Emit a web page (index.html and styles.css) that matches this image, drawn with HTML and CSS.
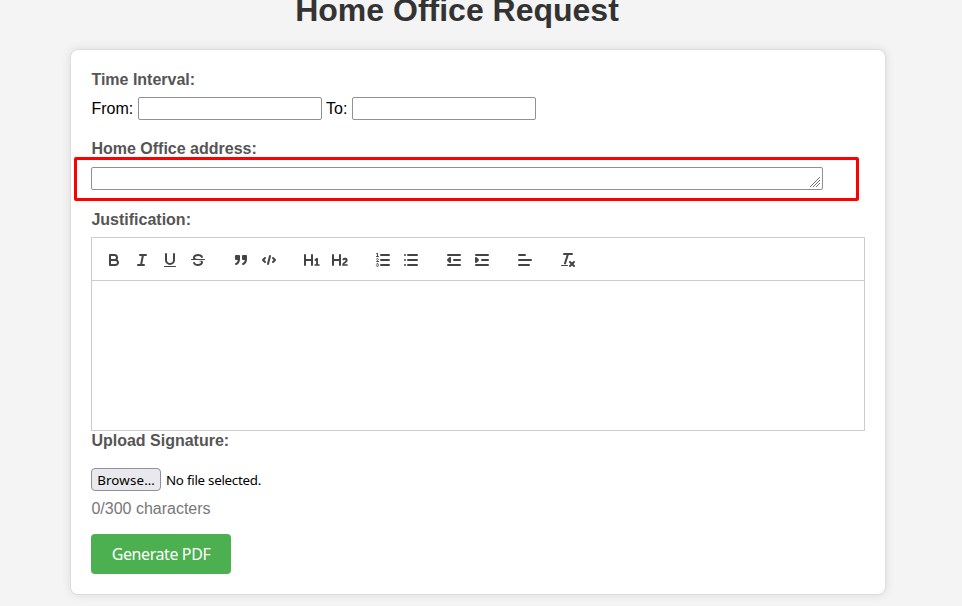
FILE: index.html
```html
<!DOCTYPE html>
<html lang="en">
<head>
<meta charset="utf-8">
<title>Home Office Request</title>
<link rel="stylesheet" href="styles.css">
</head>
<body>
<h1 class="title">Home Office Request</h1>
<form class="card">
  <label class="label">Time Interval:</label>
  <div class="interval">
    <span>From:</span><input class="date" type="text" aria-label="From">
    <span>To:</span><input class="date" type="text" aria-label="To">
  </div>
  <label class="label">Home Office address:</label>
  <div class="address">
    <div class="field">
      <svg class="grip" viewBox="0 0 10 10"><path d="M0 10L10 0M3 10L10 3M6 10L10 6"/></svg>
    </div>
    <div class="highlight"></div>
  </div>
  <label class="label">Justification:</label>
  <div class="toolbar">
    <div class="group">
      <button type="button" class="tool" aria-label="Bold"><svg viewBox="0 0 18 18"><path class="s" d="M5,4H9.5A2.5,2.5,0,0,1,12,6.5v0A2.5,2.5,0,0,1,9.5,9H5A0,0,0,0,1,5,9V4A0,0,0,0,1,5,4Z"/><path class="s" d="M5,9h5.5A2.5,2.5,0,0,1,13,11.5v0A2.5,2.5,0,0,1,10.5,14H5a0,0,0,0,1,0,0V9A0,0,0,0,1,5,9Z"/></svg></button>
      <button type="button" class="tool" aria-label="Italic"><svg viewBox="0 0 18 18"><path class="s" d="M7 4H13M5 14H11M8 14L10 4"/></svg></button>
      <button type="button" class="tool" aria-label="Underline"><svg viewBox="0 0 18 18"><path class="s" d="M5,3V9a4.012,4.012,0,0,0,4,4H9a4.012,4.012,0,0,0,4-4V3"/><rect class="f" height="1" rx=".5" ry=".5" width="12" x="3" y="15"/></svg></button>
      <button type="button" class="tool" aria-label="Strike"><svg viewBox="0 0 18 18"><path class="s thin" d="M15.5 8.5H2.5"/><path class="f" d="M9.007,8C6.542,7.791,6,7.519,6,6.5,6,5.792,7.283,5,9,5c1.571,0,2.765.679,2.969,1.309a1,1,0,0,0,1.9-.617C13.356,4.106,11.354,3,9,3,6.2,3,4,4.538,4,6.5a3.2,3.2,0,0,0,.5,1.843Z"/><path class="f" d="M8.984,10C11.457,10.208,12,10.479,12,11.5c0,0.708-1.283,1.5-3,1.5-1.571,0-2.765-.679-2.969-1.309a1,1,0,1,0-1.9.617C4.644,13.894,6.646,15,9,15c2.8,0,5-1.538,5-3.5a3.2,3.2,0,0,0-.5-1.843Z"/></svg></button>
    </div>
    <div class="group">
      <button type="button" class="tool" aria-label="Quote"><svg viewBox="0 0 18 18"><rect class="f s" height="3" width="3" x="4" y="5"/><rect class="f s" height="3" width="3" x="11" y="5"/><path class="f s" d="M7,8c0,4.031-3,5-3,5"/><path class="f s" d="M14,8c0,4.031-3,5-3,5"/></svg></button>
      <button type="button" class="tool" aria-label="Code"><svg viewBox="0 0 18 18"><path class="s" d="M5 7L3 9L5 11M13 7L15 9L13 11M10 5L8 13"/></svg></button>
    </div>
    <div class="group">
      <button type="button" class="tool" aria-label="Heading 1"><svg viewBox="0 0 18 18"><path class="f" d="M10,4V14a1,1,0,0,1-2,0V10H3v4a1,1,0,0,1-2,0V4A1,1,0,0,1,3,4V8H8V4a1,1,0,0,1,2,0Zm6.06787,9.209H14.98975V7.59863a.54085.54085,0,0,0-.605-.60547h-.62744a1.01119,1.01119,0,0,0-.748.29688L11.645,8.56641a.5435.5435,0,0,0-.022.8584l.28613.30762a.53861.53861,0,0,0,.84717.0332l.09912-.08789a1.2137,1.2137,0,0,0,.2417-.35254h.02246s-.01123.30859-.01123.60547V13.209H12.041a.54085.54085,0,0,0-.605.60547v.43945a.54085.54085,0,0,0,.605.60547h4.02686a.54085.54085,0,0,0,.605-.60547v-.43945A.54085.54085,0,0,0,16.06787,13.209Z"/></svg></button>
      <button type="button" class="tool" aria-label="Heading 2"><svg viewBox="0 0 18 18"><path class="f" d="M16.73975,13.81445v.43945a.54085.54085,0,0,1-.605.60547H11.855a.58392.58392,0,0,1-.64893-.60547V14.0127c0-2.90527,3.39941-3.42187,3.39941-4.55469a.77675.77675,0,0,0-.84717-.78125,1.17684,1.17684,0,0,0-.83594.38477c-.2749.26367-.561.374-.85791.13184l-.4292-.34082c-.30811-.24219-.38525-.51758-.1543-.81445a2.97155,2.97155,0,0,1,2.45361-1.17676,2.45393,2.45393,0,0,1,2.68408,2.40918c0,2.45312-3.1792,2.92676-3.27832,3.93848h2.79443A.54085.54085,0,0,1,16.73975,13.81445ZM9,3A.99974.99974,0,0,0,8,4V8H3V4A1,1,0,0,0,1,4V14a1,1,0,0,0,2,0V10H8v4a1,1,0,0,0,2,0V4A.99974.99974,0,0,0,9,3Z"/></svg></button>
    </div>
    <div class="group">
      <button type="button" class="tool" aria-label="Ordered list"><svg viewBox="0 0 18 18"><path class="s" d="M7 4H15M7 9H15M7 14H15"/><path class="s thin" d="M2.5 5.5H4.5"/><path class="f" d="M3.5,6A0.5,0.5,0,0,1,3,5.5V3.085l-0.276.138A0.5,0.5,0,0,1,2.053,3c-0.124-.247-0.023-0.324.224-0.447l1-.5A0.5,0.5,0,0,1,4,2.5v3A0.5,0.5,0,0,1,3.5,6Z"/><path class="s thin" d="M4.5,10.5h-2c0-.234,1.85-1.076,1.85-2.234A0.959,0.959,0,0,0,2.5,8.156"/><path class="s thin" d="M2.5,14.846a0.959,0.959,0,0,0,1.85-.109A0.7,0.7,0,0,0,3.75,14a0.688,0.688,0,0,0,.6-0.736,0.959,0.959,0,0,0-1.85-.109"/></svg></button>
      <button type="button" class="tool" aria-label="Bullet list"><svg viewBox="0 0 18 18"><path class="s" d="M6 4H15M6 9H15M6 14H15M3 4H3M3 9H3M3 14H3"/></svg></button>
    </div>
    <div class="group">
      <button type="button" class="tool" aria-label="Outdent"><svg viewBox="0 0 18 18"><path class="s" d="M3 14H15M3 4H15M9 9H15"/><path class="f s" d="M5 7V11L3 9Z"/></svg></button>
      <button type="button" class="tool" aria-label="Indent"><svg viewBox="0 0 18 18"><path class="s" d="M3 14H15M3 4H15M9 9H15"/><path class="f s" d="M3 7V11L5 9Z"/></svg></button>
    </div>
    <div class="group">
      <button type="button" class="tool" aria-label="Align"><svg viewBox="0 0 18 18"><path class="s" d="M3 9H15M3 14H13M3 4H9"/></svg></button>
    </div>
    <div class="group">
      <button type="button" class="tool" aria-label="Clear formatting"><svg viewBox="0 0 18 18"><path class="s" d="M5 3H13M6 12.35L9 3M11 11L15 15M15 11L11 15"/><rect class="f" height="1" rx=".5" ry=".5" width="7" x="2" y="14"/></svg></button>
    </div>
  </div>
  <div class="editor" contenteditable="true"></div>
  <label class="label">Upload Signature:</label>
  <div class="file"><button type="button" class="browse">Browse…</button><span class="status">No file selected.</span></div>
  <div class="count">0/300 characters</div>
  <button type="button" class="submit">Generate PDF</button>
</form>
</body>
</html>
```
FILE: styles.css
```css
* { box-sizing: border-box; }
body {
  margin: 0;
  height: 606px;
  overflow: hidden;
  background: #f4f4f4;
  font: 16px/18px "Liberation Sans", Arial, sans-serif;
  color: #000;
}
.title {
  width: 914px;
  margin: -8px 0 21px;
  font-size: 32px;
  line-height: 36px;
  text-align: center;
  color: #333;
}
.card {
  width: 816px;
  height: 546px;
  margin-left: 70px;
  padding: 21px 20px 19px;
  background: #fff;
  border: 1px solid #ddd;
  border-radius: 8px;
  box-shadow: 0 0 10px rgba(0, 0, 0, 0.1);
}
.label { display: block; padding-left: 0.4px; font-weight: bold; color: #555; }
.interval {
  display: flex;
  align-items: center;
  gap: 4.45px;
  margin: 8px 0 20px;
  padding-left: 0.4px;
}
.date {
  width: 184px;
  height: 23px;
  margin: 0;
  border: 1px solid #8f8f9d;
  border-radius: 2px;
  background: #fff;
}
.address { position: relative; margin: 9px 0 21px; }
.field {
  display: flex;
  justify-content: flex-end;
  align-items: flex-end;
  width: 732px;
  height: 23px;
  padding: 2px;
  border: 1px solid #8f8f9d;
  border-radius: 2px;
}
.grip { width: 10px; height: 10px; fill: none; stroke: #777; stroke-width: 1; }
.highlight {
  position: absolute;
  left: -17px;
  top: -10px;
  width: 785px;
  height: 44px;
  border: 3px solid #f00;
  border-radius: 2px;
}
.toolbar {
  display: flex;
  gap: 15px;
  height: 44px;
  margin-top: 8px;
  padding: 10px 8px 8px;
  border: 1px solid #ccc;
}
.group { display: flex; }
.tool {
  width: 28px;
  height: 24px;
  padding: 3px 5px;
  border: 0;
  background: none;
}
.tool svg { display: block; width: 18px; height: 18px; }
.s { fill: none; stroke: #444; stroke-width: 2; stroke-linecap: round; stroke-linejoin: round; }
.thin { stroke-width: 1; }
.f { fill: #444; }
.editor { height: 150px; margin-bottom: 1px; border: 1px solid #ccc; border-top: 0; }
.file {
  display: flex;
  align-items: center;
  gap: 5px;
  margin-top: 18px;
  font: 13.333px/18px "Noto Sans", sans-serif;
}
.status { letter-spacing: -0.26px; }
.browse {
  width: 70px;
  height: 23px;
  padding: 0;
  border: 1px solid #8f8f9d;
  border-radius: 4px;
  background: #e9e9ed;
  color: #000;
  font: inherit;
  letter-spacing: 0.15px;
}
.count { margin-top: 9px; padding-left: 0.4px; color: #777; }
.submit {
  display: block;
  width: 140px;
  height: 40px;
  margin-top: 16px;
  padding: 0;
  border: 0;
  border-radius: 4px;
  background: #4caf50;
  color: #fff;
  font: 16px/22px "Noto Sans", sans-serif;
  letter-spacing: -0.4px;
}
```
